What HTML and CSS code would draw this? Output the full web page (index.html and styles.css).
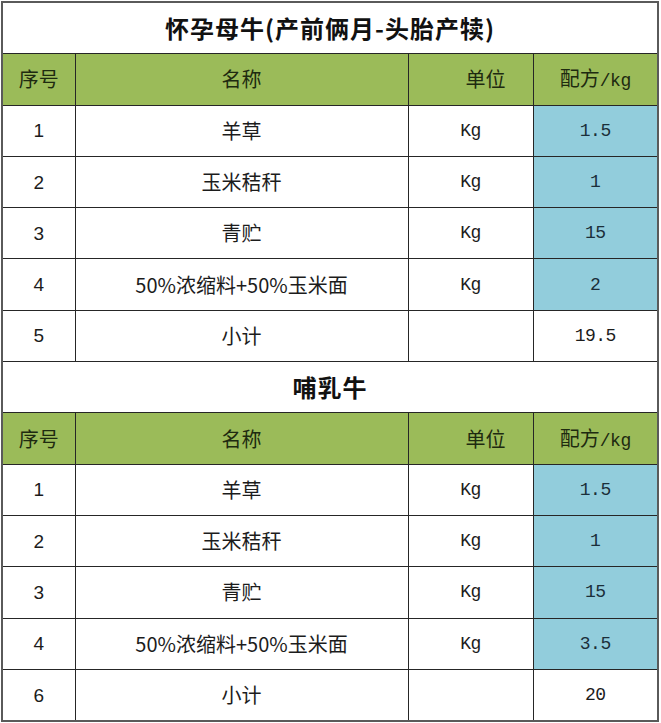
FILE: index.html
```html
<!DOCTYPE html>
<html lang="zh">
<head>
<meta charset="utf-8">
<link rel="stylesheet" href="styles.css">
</head>
<body>
<div class="wrap">
<table class="feed">
  <colgroup><col class="c1"><col class="c2"><col class="c3"><col class="c4"></colgroup>
  <tr class="title"><td colspan="4">怀孕母牛(产前俩月-头胎产犊)</td></tr>
  <tr class="head"><td>序号</td><td>名称</td><td class="unit-h">单位</td><td>配方<span class="mono">/kg</span></td></tr>
  <tr><td class="no">1</td><td>羊草</td><td class="mono">Kg</td><td class="mono blue">1.5</td></tr>
  <tr><td class="no">2</td><td>玉米秸秆</td><td class="mono">Kg</td><td class="mono blue">1</td></tr>
  <tr><td class="no">3</td><td>青贮</td><td class="mono">Kg</td><td class="mono blue">15</td></tr>
  <tr><td class="no">4</td><td>50%浓缩料+50%玉米面</td><td class="mono">Kg</td><td class="mono blue">2</td></tr>
  <tr><td class="no">5</td><td>小计</td><td></td><td class="mono">19.5</td></tr>
  <tr class="title"><td colspan="4">哺乳牛</td></tr>
  <tr class="head"><td>序号</td><td>名称</td><td class="unit-h">单位</td><td>配方<span class="mono">/kg</span></td></tr>
  <tr><td class="no">1</td><td>羊草</td><td class="mono">Kg</td><td class="mono blue">1.5</td></tr>
  <tr><td class="no">2</td><td>玉米秸秆</td><td class="mono">Kg</td><td class="mono blue">1</td></tr>
  <tr><td class="no">3</td><td>青贮</td><td class="mono">Kg</td><td class="mono blue">15</td></tr>
  <tr><td class="no">4</td><td>50%浓缩料+50%玉米面</td><td class="mono">Kg</td><td class="mono blue">3.5</td></tr>
  <tr><td class="no">6</td><td>小计</td><td></td><td class="mono">20</td></tr>
</table>
</div>
</body>
</html>
```
FILE: styles.css
```css
html, body {
  margin: 0;
  padding: 0;
  background: #ffffff;
}
.wrap {
  padding: 1px 0 0 1px;
}
.feed {
  border-collapse: collapse;
  table-layout: fixed;
  width: 656px;
  border: 2px solid #5a5a5a;
  font-family: "Noto Sans CJK SC", "Noto Sans", sans-serif;
  font-size: 20px;
  color: #1c1c1c;
}
.c1 { width: 73px; }
.c2 { width: 333px; }
.c3 { width: 125px; }
.c4 { width: 125px; }
.feed td {
  border: 1px solid #262626;
  height: 50.3px;
  padding: 0;
  text-align: center;
  vertical-align: middle;
  line-height: 1;
}
.title td {
  font-weight: 700;
  font-size: 24px;
  letter-spacing: 1px;
  color: #111;
  border-left: 2px solid #5a5a5a;
  border-right: 2px solid #5a5a5a;
}
.head td {
  background: #9bbb59;
  color: #1e2a10;
}
.unit-h {
  padding-left: 30px !important;
}
.head .mono {
  font-size: 18px;
}
.mono {
  font-family: "Liberation Mono", "DejaVu Sans Mono", monospace;
  font-size: 18px;
  letter-spacing: -0.5px;
}
.no {
  font-family: "Liberation Sans", Arial, sans-serif;
  font-size: 19px;
}
.blue {
  background: #92cddc;
  color: #1b2f3a;
}
```
